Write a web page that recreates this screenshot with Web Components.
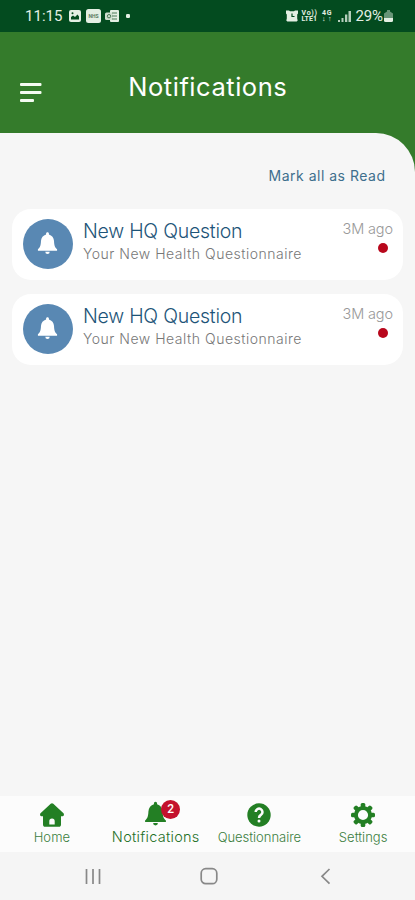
<!DOCTYPE html>
<html lang="en">
<head>
<meta charset="utf-8">
<title>Notifications</title>
<style>
body{margin:0;font-family:Roboto,"Liberation Sans",sans-serif;background:#f6f6f6}
</style>
</head>
<body>
<app-screen>
  <status-bar slot="status"></status-bar>
  <app-header slot="header"><fit-label width="158">Notifications</fit-label></app-header>
  <mark-read><fit-label width="116">Mark all as Read</fit-label></mark-read>
  <notification-card>
    <fit-label slot="title" width="159">New HQ Question</fit-label>
    <fit-label slot="text" width="218">Your New Health Questionnaire</fit-label>
    <fit-label slot="time" width="50">3M ago</fit-label>
  </notification-card>
  <notification-card>
    <fit-label slot="title" width="159">New HQ Question</fit-label>
    <fit-label slot="text" width="218">Your New Health Questionnaire</fit-label>
    <fit-label slot="time" width="50">3M ago</fit-label>
  </notification-card>
  <tab-bar slot="tabs">
    <tab-item icon="home"><fit-label width="36">Home</fit-label></tab-item>
    <tab-item icon="bell" badge="2" active><fit-label width="87">Notifications</fit-label></tab-item>
    <tab-item icon="help"><fit-label width="83">Questionnaire</fit-label></tab-item>
    <tab-item icon="gear"><fit-label width="48">Settings</fit-label></tab-item>
  </tab-bar>
  <system-nav slot="nav"></system-nav>
</app-screen>
<script>
const BELL = '<path d="M12 .8c-.9 0-1.500.7-1.500 1.500v.8C7.500 4 5.400 6.500 5.200 10c-.2 4.500-.8 6.500-3.200 8.600v1.500h20v-1.500c-2.400-2.100-3-4.100-3.200-8.600-.2-3.500-2.300-6-5.300-6.900v-.8c0-.8-.6-1.500-1.500-1.500z"/><path d="M9.700 21.200h4.600a2.300 2.300 0 0 1-4.600 0z"/>';
const teeth = Array.from({length:8},(_,i)=>`<rect x="9.700" y="0" width="4.600" height="5" rx="1.500" transform="rotate(${i*45} 12 12)"/>`).join('');
const ICONS = {
  home:'<path d="M12 .3a2 2 0 0 1 1.300.5L23.500 10.200c.8.8.5 3-.9 3H21v8.300c0 1.400-.8 2.300-2.200 2.300H5.200C3.800 23.800 3 22.900 3 21.500v-8.300H1.400c-1.400 0-1.700-2.200-.9-3L10.700.8A2 2 0 0 1 12 .3z"/><path d="M9.300 21.500v-3.400a2.700 2.700 0 0 1 5.400 0v3.400z" fill="#fcfcfc"/>',
  bell:BELL,
  help:'<circle cx="12" cy="12" r="11.700"/><path d="M8.700 9a3.400 3.400 0 1 1 5.200 2.900c-1.400.9-1.900 1.400-1.900 3" fill="none" stroke="#fcfcfc" stroke-width="2.500"/><circle cx="12" cy="18" r="1.500" fill="#fcfcfc"/>',
  gear:teeth+'<circle cx="12" cy="12" r="7.100" fill="none" stroke="currentColor" stroke-width="4"/>'
};
function define(name, html, setup){
  customElements.define(name, class extends HTMLElement{
    constructor(){
      super();
      this.attachShadow({mode:'open'}).innerHTML = html;
    }
    connectedCallback(){ if(setup) setup(this); }
  });
}
define('app-screen',`<style>
:host{display:flex;flex-direction:column;width:415px;height:900px;overflow:hidden;background:#347b2b}
main{flex:1;box-sizing:border-box;background:#f6f6f6;border-top-right-radius:39px;padding:0 12px;display:flex;flex-direction:column;gap:14px}
</style><slot name="status"></slot><slot name="header"></slot><main><slot></slot></main><slot name="tabs"></slot><slot name="nav"></slot>`);
define('status-bar',`<style>
:host{display:flex;justify-content:space-between;align-items:center;height:32px;box-sizing:border-box;padding:0 22px 0 25px;background:#034b1f;color:#e4efe3;font-size:15px}
div{display:flex;align-items:center}svg{display:block;fill:currentColor}
.net{display:grid;font-size:7px;line-height:6.500px;font-weight:700;text-align:center}
</style>
<div><fit-label width="37">11:15</fit-label>
<svg width="12" height="12" style="margin-left:6px"><rect width="12" height="12" rx="2"/><path d="M2 9.500V7l2-1.500L6 7l2.500-2.500 1.500 2v3z" fill="#034b1f"/><circle cx="3.500" cy="3.300" r="1" fill="#034b1f"/></svg>
<svg width="15" height="14" style="margin-left:5px"><rect width="15" height="14" rx="2.500"/><text x="7.500" y="9" text-anchor="middle" font-size="5" font-weight="700" fill="#587b60">NHS</text></svg>
<svg width="14" height="12" style="margin-left:4px"><rect x="5" width="9" height="12" rx="1"/><rect y="2.500" width="8" height="7.500" rx="1.500" fill="#cfdfcf"/><path d="M7 3h5M7 6h5M7 9h5" stroke="#4b7856"/><circle cx="4" cy="6.200" r="1.700" fill="none" stroke="#4b7856"/></svg>
<svg width="4" height="4" style="margin-left:7px"><rect width="4" height="4" rx="1.200"/></svg></div>
<div><svg width="12" height="12"><path d="M0 .5h3l1 .7h4l1-.7h3v3l-.8 1v4l.5 2-1 1H1.300l-1-1 .5-2v-4L0 3.500z"/><path d="M6 3.500v3h2.500" fill="none" stroke="#034b1f" stroke-width="1.200"/></svg>
<span class="net" style="margin-left:4px"><fit-label width="15">Vo))</fit-label><fit-label width="15">LTE1</fit-label></span>
<span class="net" style="margin-left:5px"><fit-label width="9">4G</fit-label><fit-label width="9">↓↑</fit-label></span>
<svg width="13" height="12" style="margin-left:6px"><path d="M0 10h2v2H0zM3.500 8h2v4h-2zM7 4.500h2.300V12H7zM10.500 1H13v11h-2.500z" opacity=".8"/></svg>
<fit-label width="27" style="margin-left:5px">29%</fit-label>
<svg width="9" height="12" style="margin-left:1px"><path d="M3 0h3v1.500l3 2V8H0V3.500l3-2z" opacity=".45"/><path d="M0 8h9v2.500Q9 12 7.500 12h-6Q0 12 0 10.500z"/></svg></div>`);
define('app-header',`<style>
:host{display:grid;grid-template-columns:43px 1fr 43px;height:101px;align-items:center;box-sizing:border-box;color:#fff;font:400 25.500px/30px Inter,Roboto,sans-serif;background:#347b2b}
svg{margin:21px 0 0 20px;display:block}
.title{text-align:center;margin-top:8px}
</style><svg width="22" height="20" fill="#f4fbf2"><rect y="0" width="21.500" height="3" rx="1"/><rect y="8" width="21.500" height="3" rx="1"/><rect y="16" width="14" height="3" rx="1"/></svg><div class="title"><slot></slot></div>`);
define('mark-read',`<style>:host{display:flex;justify-content:flex-end;height:27px;padding:35px 18px 0 0;font:400 14px/16px Inter,Roboto,sans-serif;color:#3e6f8d}</style><slot></slot>`);
define('notification-card',`<style>
:host{display:grid;grid-template-columns:50px 1fr auto;column-gap:10px;height:71px;box-sizing:border-box;border-radius:19px;background:#fff;padding:10px 10px 0 11px;font-family:Inter,Roboto,sans-serif}
.disc{width:50px;height:50px;border-radius:50%;background:#5988b3;display:grid;place-items:center}
.disc svg{width:23px;height:24px;fill:#fff;display:block;margin:-3px 0 0 -1px}
.copy,.meta{display:flex;flex-direction:column}
.title{font-size:19.500px;line-height:24px;color:#1d5478;font-weight:300}
.text{font-size:14px;line-height:18px;color:#777;font-weight:300;margin-top:2px}
.meta{font-size:14.500px;line-height:18px;color:#999;font-weight:300;align-items:flex-end;padding-top:1px}
.dot{width:10px;height:10px;border-radius:50%;background:#b8071c;margin:5px 5px 0 0}
</style><div class="disc"><svg viewBox="0 0 24 24">${BELL}</svg></div>
<div class="copy"><span class="title"><slot name="title"></slot></span><span class="text"><slot name="text"></slot></span></div>
<div class="meta"><slot name="time"></slot><span class="dot"></span></div>`);
define('tab-bar',`<style>:host{display:grid;grid-template-columns:repeat(4,1fr);height:56px;background:#fcfcfc}</style><slot></slot>`);
define('tab-item',`<style>
:host{display:flex;flex-direction:column;align-items:center;box-sizing:border-box;padding-top:7px;color:#237f24;font:400 13px/18px Inter,Roboto,sans-serif}
:host([active]){padding-top:5px;font-size:14.500px}
.icon{position:relative;height:24px;margin-bottom:1px}
:host([active]) .icon{margin-bottom:2px;height:25px}
svg{display:block;width:24px;height:24px;fill:currentColor}
:host([active]) svg{height:25px;width:25px}
.badge{position:absolute;left:18px;top:-1px;width:19px;height:19px;border-radius:50%;background:#c4112d;color:#fff;font:500 12px/19px Roboto,sans-serif;text-align:center}
.label{color:#3b7e40;font-weight:300}:host([active]) .label{color:#1f7027}
</style><div class="icon"></div><span class="label"><slot></slot></span>`,el=>{
  const b=el.getAttribute('badge');
  el.shadowRoot.querySelector('.icon').innerHTML=`<svg viewBox="0 0 24 24">${ICONS[el.getAttribute('icon')]}</svg>`+(b?`<span class="badge">${b}</span>`:'');
});
define('system-nav',`<style>
:host{display:flex;height:48px;background:#f5f5f5;padding-left:84px;align-items:center}
svg{display:block;fill:none;stroke:#888;stroke-width:1.700}
</style><svg width="18" height="18"><path d="M2.500 2v15M9 2v15M15.500 2v15"/></svg>
<svg width="18" height="18" style="margin-left:98px"><rect x="1.200" y="1.700" width="15.600" height="15" rx="4.500"/></svg>
<svg width="12" height="18" style="margin-left:101px"><path d="M10.500 2L3 9.300l7.500 7.300"/></svg>`);
// Spreads its text over the given width by letter spacing.
define('fit-label',`<style>:host{display:inline-block;white-space:nowrap}span{display:inline-block}</style><span><slot></slot></span>`,el=>{
  const s=el.shadowRoot.querySelector('span'), w=+el.getAttribute('width'), n=[...el.textContent].length;
  const ls=(w+.5-s.getBoundingClientRect().width)/(n-1);
  s.style.letterSpacing=ls+'px';
  s.style.marginRight=-ls+'px';
});
</script>
</body>
</html>
